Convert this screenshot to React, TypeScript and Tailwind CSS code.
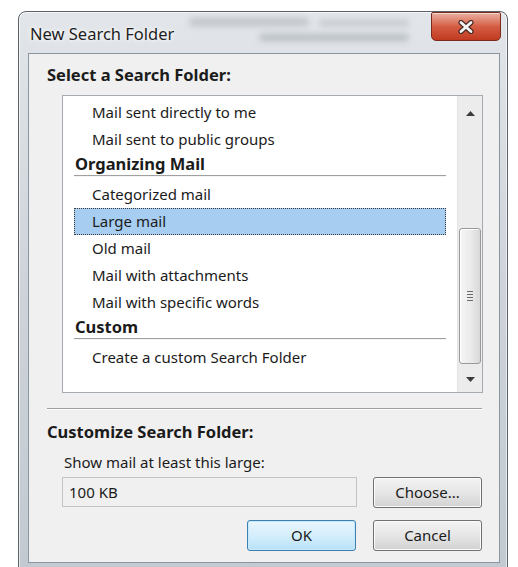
import React from "react";

const font = { fontFamily: '"Noto Sans", "Open Sans", Arial, sans-serif' };

type Row = { kind: "item" | "group"; text: string; selected?: boolean };

const rows: Row[] = [
  { kind: "item", text: "Mail sent directly to me" },
  { kind: "item", text: "Mail sent to public groups" },
  { kind: "group", text: "Organizing Mail" },
  { kind: "item", text: "Categorized mail" },
  { kind: "item", text: "Large mail", selected: true },
  { kind: "item", text: "Old mail" },
  { kind: "item", text: "Mail with attachments" },
  { kind: "item", text: "Mail with specific words" },
  { kind: "group", text: "Custom" },
  { kind: "item", text: "Create a custom Search Folder" },
];

function CloseButton() {
  return (
    <div className="absolute right-[6px] top-0 flex h-[29px] w-[70px] items-center justify-center rounded-b-[5px] rounded-t-[2px] border border-[#7a2b1e] bg-gradient-to-b from-[#e9b0a2] via-[#d45d43] to-[#c0391f] shadow-[inset_0_1px_0_rgba(255,255,255,0.5)]">
      <svg width="18" height="14" viewBox="0 0 18 14">
        <path d="M4 2.5 L14 11.5 M14 2.5 L4 11.5" stroke="#4a2a24" strokeWidth="5.2" strokeLinecap="round" />
        <path d="M4 2.5 L14 11.5 M14 2.5 L4 11.5" stroke="#f4f4f4" strokeWidth="2.8" strokeLinecap="round" />
      </svg>
    </div>
  );
}

function Scrollbar() {
  return (
    <div className="flex w-[25px] flex-col items-center border-l border-[#e4e4e4] bg-[#ececec]">
      <div className="flex h-[33px] items-center justify-center pt-[1px]">
        <svg width="9" height="5" viewBox="0 0 9 5">
          <path d="M0 5 L4.5 0 L9 5 Z" fill="#3c3c3c" />
        </svg>
      </div>
      <div className="mt-[99px] flex h-[136px] w-[22px] items-center justify-center rounded-[3px] border border-[#9a9a9a] bg-gradient-to-r from-[#f6f6f6] via-[#ececec] to-[#d8d8d8] shadow-[inset_1px_1px_0_#ffffff]">
        <div className="flex flex-col gap-[2px]">
          <div className="h-px w-[6px] bg-[#6a6a6a]" />
          <div className="h-px w-[6px] bg-[#6a6a6a]" />
          <div className="h-px w-[6px] bg-[#6a6a6a]" />
          <div className="h-px w-[6px] bg-[#6a6a6a]" />
        </div>
      </div>
      <div className="flex flex-1 items-center justify-center pt-[2px]">
        <svg width="9" height="5" viewBox="0 0 9 5">
          <path d="M0 0 L4.5 5 L9 0 Z" fill="#3c3c3c" />
        </svg>
      </div>
    </div>
  );
}

function FolderList() {
  return (
    <div className="ml-[15px] mt-[10px] flex h-[298px] w-[421px] border border-[#a5aab0] bg-white">
      <div className="flex-1 px-[11px] pt-[3px]">
        {rows.map((r) =>
          r.kind === "group" ? (
            <div key={r.text} className="h-[28px]">
              <div className="flex h-[22px] items-center pl-[1px] text-[16.5px] font-bold text-[#1b1b1b]">{r.text}</div>
              <div className="h-px bg-[#a0a0a0]" />
              <div className="h-px bg-[#f4f4f4]" />
            </div>
          ) : (
            <div
              key={r.text}
              className={
                r.selected
                  ? "flex h-[27px] items-center border border-dotted border-[#3a3a3a] bg-[#a7cdf0] pl-[17px] text-[15px] text-[#1b1b1b]"
                  : "flex h-[27px] items-center pl-[18px] text-[15px] text-[#1b1b1b]"
              }
            >
              {r.text}
            </div>
          )
        )}
      </div>
      <Scrollbar />
    </div>
  );
}

function Button({ label, primary }: { label: string; primary?: boolean }) {
  return (
    <button
      className={
        primary
          ? "flex h-[31px] w-[109px] items-center justify-center rounded-[3px] border border-[#3c7fb1] bg-gradient-to-b from-[#eaf6fd] via-[#d4eefc] to-[#b9e2f8] text-[15px] text-[#1b1b1b] shadow-[inset_0_0_0_1px_#c6e9fc]"
          : "flex h-[31px] w-[109px] items-center justify-center rounded-[3px] border border-[#707070] bg-gradient-to-b from-[#f3f3f3] via-[#e6e6e6] to-[#d2d2d2] text-[15px] text-[#1b1b1b] shadow-[inset_0_0_0_1px_#fbfbfb]"
      }
    >
      {label}
    </button>
  );
}

export default function App() {
  return (
    <div className="h-[567px] w-[518px] overflow-hidden bg-white pl-[18px] pt-[11px]" style={font}>
      <div className="flex h-[570px] w-[490px] flex-col rounded-t-[8px] border border-[#5b6169] bg-gradient-to-b from-[#e2e6ea] via-[#cdd3d9] to-[#c2c9d0] shadow-[inset_0_0_0_1px_rgba(255,255,255,0.6)]">
        {/* title bar */}
        <div className="relative h-[41px] overflow-hidden">
          <div className="absolute left-[170px] top-[6px] h-[8px] w-[120px] rounded bg-[#8e949b] opacity-40 blur-[3px]" />
          <div className="absolute left-[240px] top-[22px] h-[7px] w-[150px] rounded bg-[#7e858c] opacity-40 blur-[3px]" />
          <div className="absolute left-[300px] top-[8px] h-[6px] w-[90px] rounded bg-[#8e949b] opacity-35 blur-[3px]" />
          <div className="absolute left-[11px] top-[10px] text-[16.5px] text-[#1e1e1e] [text-shadow:0_0_6px_#ffffff,0_0_3px_#ffffff]">
            New Search Folder
          </div>
          <CloseButton />
        </div>
        {/* client area */}
        <div className="ml-[9px] mr-[7px] flex h-[510px] flex-col border border-[#8b959f] bg-[#f0f0f0] pl-[18px] pr-[17px] pt-[11px] text-[#1b1b1b]">
          <div className="flex h-[20px] items-center text-[16.5px] font-bold">Select a Search Folder:</div>
          <FolderList />
          <div className="mt-[15px] h-px bg-[#a0a0a0]" />
          <div className="h-px bg-[#fdfdfd]" />
          <div className="mt-[12px] flex h-[20px] items-center text-[16.5px] font-bold">Customize Search Folder:</div>
          <div className="ml-[17px] mt-[10px] flex h-[20px] items-center text-[15px]">Show mail at least this large:</div>
          <div className="ml-[15px] mt-[5px] flex gap-[16px]">
            <div className="flex h-[30px] w-[295px] items-center border border-[#c2c4c8] bg-[#f0f0f0] pl-[6px] text-[15px]">
              100 KB
            </div>
            <Button label="Choose..." />
          </div>
          <div className="mt-[12px] flex justify-end gap-[17px]">
            <Button label="OK" primary />
            <Button label="Cancel" />
          </div>
        </div>
      </div>
    </div>
  );
}
